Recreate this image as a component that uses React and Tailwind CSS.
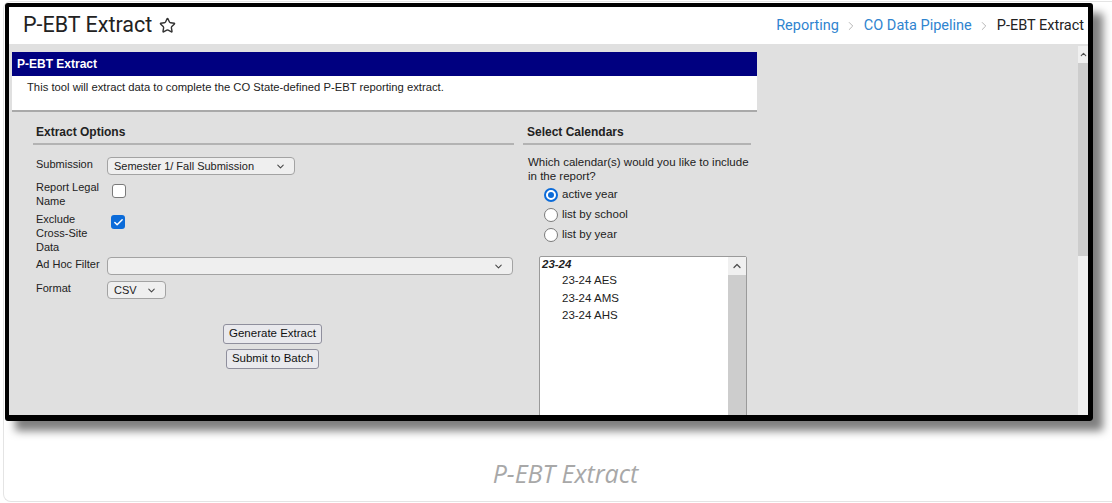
import React from "react";
import { Star, ChevronRight, ChevronDown, ChevronUp, Check } from "lucide-react";

const arial = "font-['Liberation_Sans',Arial,sans-serif]";

const FakeSelect = ({ value, className }) => (
  <div
    className={`h-[18px] shrink-0 flex items-center justify-between pl-[6px] pr-[8px] bg-[#efefef] border border-[#a3a3a3] rounded-[4px] text-[#222] ${className}`}
  >
    <span>{value}</span>
    <ChevronDown className="h-[11px] w-[11px] text-[#444]" strokeWidth={2.2} />
  </div>
);

const Checkbox = ({ checked }) =>
  checked ? (
    <div className="w-[14px] h-[14px] rounded-[3px] bg-[#0b6bd9] flex items-center justify-center">
      <Check className="h-[11px] w-[11px] text-white" strokeWidth={3.2} />
    </div>
  ) : (
    <div className="w-[14px] h-[14px] rounded-[3px] bg-white border-[1.5px] border-[#7a7a7a]" />
  );

const Radio = ({ checked, label }) => (
  <div className="h-[20px] flex items-center">
    {checked ? (
      <div className="w-[14px] h-[14px] rounded-full border-2 border-[#0b6bd9] bg-white flex items-center justify-center">
        <div className="w-[6px] h-[6px] rounded-full bg-[#0b6bd9]" />
      </div>
    ) : (
      <div className="w-[14px] h-[14px] rounded-full border-[1.5px] border-[#7a7a7a] bg-white" />
    )}
    <span className="ml-[4px]">{label}</span>
  </div>
);

const FormRow = ({ label, children, className = "" }) => (
  <div className={`flex items-start ${className}`}>
    <div className="w-[71px] shrink-0 leading-[14px] pr-[4px]">{label}</div>
    {children}
  </div>
);

const PanelButton = ({ children }) => (
  <button className="h-[20px] px-[5px] bg-[#e9e9ed] border border-[#8f8f9d] rounded-[3px] text-[11.5px] leading-none text-[#111]">
    {children}
  </button>
);

const calendars = ["23-24 AES", "23-24 AMS", "23-24 AHS"];

export default function App() {
  return (
    <div className="w-[1112px] h-[503px] overflow-hidden bg-white pt-[1px] pl-[3px]">
      <div className="w-[1124px] h-[501px] border-l border-t border-b border-[#e4e4e4] rounded-bl-[8px] rounded-tl-[8px]">
        {/* screenshot frame */}
        <div className="ml-[1px] mt-[1px] w-[1088px] h-[418px] border-l-4 border-t-4 border-r-[5px] border-b-[6px] border-black rounded-[3px] shadow-[10px_10px_8px_rgba(0,0,0,0.5)] flex flex-col overflow-hidden">
          {/* page header */}
          <div className="h-[37px] shrink-0 bg-white flex items-center justify-between pl-[14px] pr-[4px] font-['Roboto',sans-serif]">
            <div className="flex items-center text-[21.5px] text-[#222]">
              <span>P-EBT Extract</span>
              <Star className="ml-[7px] h-[17px] w-[17px] text-[#333]" strokeWidth={2} />
            </div>
            <div className="flex items-center text-[14.5px] text-[#222]">
              <span className="text-[#2f84cf]">Reporting</span>
              <ChevronRight className="mx-[5.5px] h-[14px] w-[14px] text-[#b0b0b0]" strokeWidth={1.6} />
              <span className="text-[#2f84cf]">CO Data Pipeline</span>
              <ChevronRight className="mx-[5.5px] h-[14px] w-[14px] text-[#b0b0b0]" strokeWidth={1.6} />
              <span>P-EBT Extract</span>
            </div>
          </div>

          {/* tool area */}
          <div className={`flex-1 flex bg-[#e0e0e0] overflow-hidden text-[11px] text-[#222] ${arial}`}>
            <div className="flex-1 overflow-hidden pl-[3px] pt-[8px]">
              <div className="w-[745px]">
                <div className="h-[24px] bg-[#000080] text-white font-bold text-[12px] leading-[24px] pl-[5px]">
                  P-EBT Extract
                </div>
                <div className="h-[36px] bg-white border-b-2 border-[#a9a9a9] pl-[15px] pt-[4px] leading-[14px] text-[11.25px]">
                  This tool will extract data to complete the CO State-defined P-EBT reporting extract.
                </div>

                <div className="flex pl-[21px]">
                  {/* extract options */}
                  <div className="w-[481px]">
                    <div className="mt-[13px] pl-[3px] pb-[3px] border-b-2 border-[#b3b3b3] font-bold text-[12px] leading-[15px]">
                      Extract Options
                    </div>
                    <div className="pl-[3px]">
                      <FormRow label="Submission" className="mt-[12px]">
                        <FakeSelect value="Semester 1/ Fall Submission" className="w-[188px]" />
                      </FormRow>
                      <FormRow label="Report Legal Name" className="mt-[5px]">
                        <div className="ml-[5px] mt-[4px]">
                          <Checkbox />
                        </div>
                      </FormRow>
                      <FormRow label="Exclude Cross-Site Data" className="mt-[4px]">
                        <div className="ml-[4px] mt-[3px]">
                          <Checkbox checked />
                        </div>
                      </FormRow>
                      <FormRow label="Ad Hoc Filter" className="mt-[3px]">
                        <FakeSelect value="" className="w-[406px]" />
                      </FormRow>
                      <FormRow label="Format" className="mt-[6px]">
                        <FakeSelect value="CSV" className="w-[59px]" />
                      </FormRow>
                    </div>
                    <div className="flex flex-col items-center mt-[25px] gap-[5px] pr-[2px]">
                      <PanelButton>Generate Extract</PanelButton>
                      <PanelButton>Submit to Batch</PanelButton>
                    </div>
                  </div>

                  {/* calendar picker */}
                  <div className="w-[228px] ml-[9px] text-[11.5px]">
                    <div className="mt-[13px] pl-[4px] pb-[3px] border-b-2 border-[#b3b3b3] font-bold text-[12px] leading-[15px]">
                      Select Calendars
                    </div>
                    <div className="mt-[10px] pl-[5px] leading-[14px]">
                      Which calendar(s) would you like to include in the report?
                    </div>
                    <div className="mt-[2px] pl-[21px]">
                      <Radio checked label="active year" />
                      <Radio label="list by school" />
                      <Radio label="list by year" />
                    </div>
                    <div className="mt-[11px] ml-[16px] w-[208px] h-[200px] bg-white border border-[#9a9a9a] rounded-[2px] flex">
                      <div className="flex-1">
                        <div className="pl-[2px] leading-[15px] font-bold italic">23-24</div>
                        {calendars.map((name) => (
                          <div key={name} className="pl-[22px] leading-[17.5px]">
                            {name}
                          </div>
                        ))}
                      </div>
                      <div className="w-[18px] flex flex-col">
                        <div className="h-[18px] bg-[#f0f0f0] flex items-center justify-center">
                          <ChevronUp className="h-[12px] w-[12px] text-[#505050]" strokeWidth={2.6} />
                        </div>
                        <div className="flex-1 bg-[#cdcdcd]" />
                      </div>
                    </div>
                  </div>
                </div>
              </div>
            </div>

            {/* page scrollbar */}
            <div className="w-[10px] shrink-0 mt-[2px] bg-[#f0f0f0] flex flex-col">
              <div className="h-[17px] flex items-center justify-center">
                <ChevronUp className="h-[9px] w-[9px] text-[#505050]" strokeWidth={3} />
              </div>
              <div className="h-[193px] bg-[#cdcdcd]" />
            </div>
          </div>
        </div>

        <div className="mt-[35px] text-center text-[25px] leading-[34px] italic text-[#a8a8a8] font-['Open_Sans',sans-serif]">
          P-EBT Extract
        </div>
      </div>
    </div>
  );
}
